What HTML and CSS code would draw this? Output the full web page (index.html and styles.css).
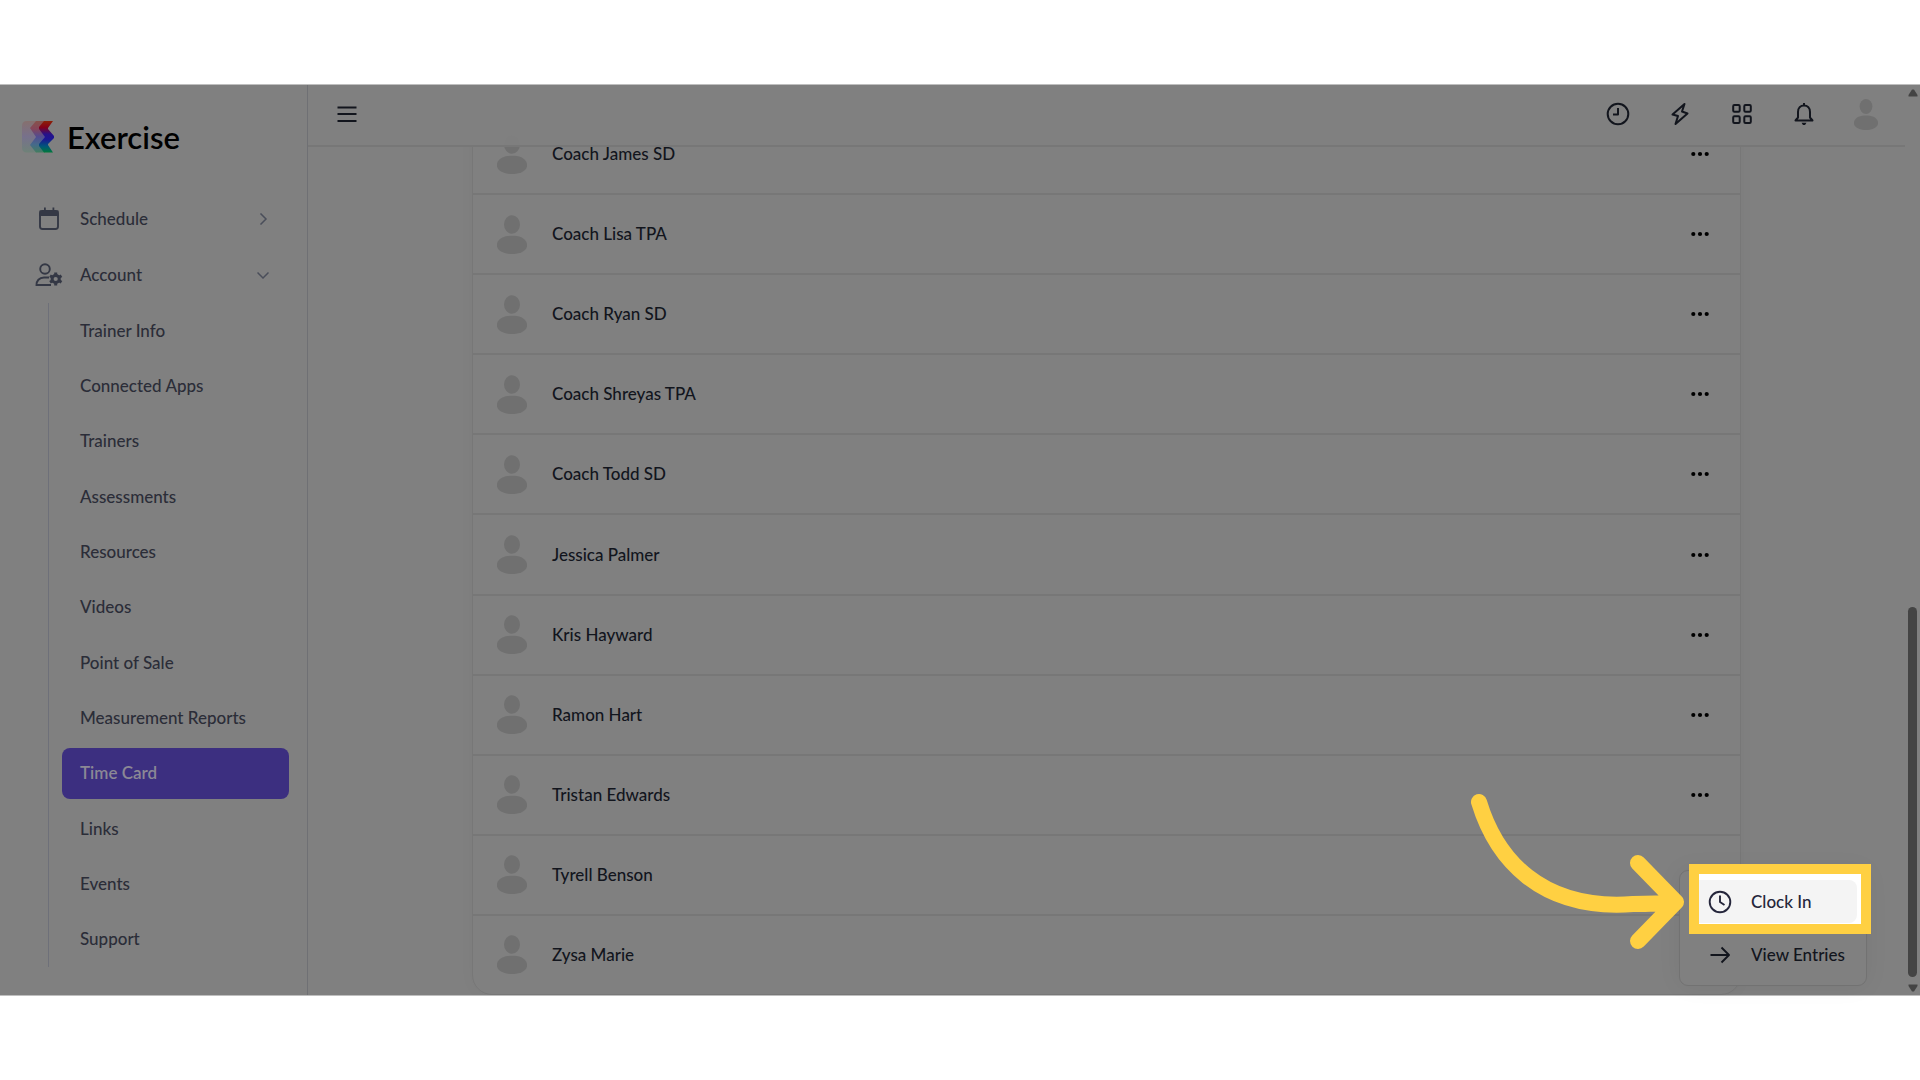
FILE: index.html
```html
<!DOCTYPE html>
<html lang="en">
<head>
<meta charset="utf-8">
<title>Exercise - Time Card</title>
<link rel="stylesheet" href="styles.css">
</head>
<body>
<svg class="defs" aria-hidden="true">
  <symbol id="person" viewBox="0 0 30 38">
    <ellipse cx="15" cy="9" rx="8" ry="9.3"/>
    <path d="M0 28C2 22 8 20.300 15 20.300S28 22 30 28V31C29 36 22 38.500 15 38.500S1 36 0 31Z"/>
  </symbol>
  <symbol id="dots" viewBox="0 0 18 6">
    <circle cx="2.300" cy="3" r="2.100"/><circle cx="9" cy="3" r="2.100"/><circle cx="15.700" cy="3" r="2.100"/>
  </symbol>
</svg>
<div class="app">
  <aside class="sidebar">
    <a class="brand" href="#">
      <svg width="32" height="32" viewBox="0 0 32 32" aria-hidden="true">
        <defs>
          <linearGradient id="spectrum" x1="0" y1="0" x2="0" y2="1">
            <stop offset="0" stop-color="#8c2206"/><stop offset=".2" stop-color="#850018"/>
            <stop offset=".42" stop-color="#26128a"/><stop offset=".58" stop-color="#1c1694"/>
            <stop offset=".8" stop-color="#00567a"/><stop offset="1" stop-color="#00793a"/>
          </linearGradient>
          <linearGradient id="pale" x1="0" y1="0" x2="0" y2="1">
            <stop offset="0" stop-color="#86706e"/><stop offset=".5" stop-color="#77718c"/><stop offset="1" stop-color="#6f8278"/>
          </linearGradient>
          <linearGradient id="soft" x1="0" y1="0" x2="0" y2="1">
            <stop offset="0" stop-color="#87514a"/><stop offset=".25" stop-color="#85465a"/>
            <stop offset=".5" stop-color="#514c92"/><stop offset=".75" stop-color="#456a8a"/><stop offset="1" stop-color="#437d5f"/>
          </linearGradient>
        </defs>
        <path d="M5 0H15L10 7L16 16L10 24L15 31.500H5Q0 31.500 0 26.500V5Q0 0 5 0Z" fill="url(#pale)"/>
        <path d="M14 0H24L18 7L24 16L18 24L23 31.500H14L8 24L14 16L8 7Z" fill="url(#soft)"/>
        <path d="M22 0H31L26 7V8L32 15V17L26 23V24L31 31.500H22L17 25V23L23 16L17 8V6Z" fill="url(#spectrum)"/>
      </svg>
      <span>Exercise</span>
    </a>
    <nav class="nav">
      <a class="nav-item" href="#">
        <svg class="nav-icon" width="28" height="24" viewBox="0 0 28 24" aria-hidden="true"><rect x="5" y="4" width="18" height="18" rx="2.500" fill="none" stroke="currentColor" stroke-width="1.900"/><path d="M4.500 3.500h19v5.500h-19zM9 .500h1.800v4H9zM17.500 .500h1.800v4h-1.800z" fill="currentColor"/></svg>
        <span>Schedule</span>
        <svg class="chevron" width="12" height="12" viewBox="0 0 12 12" aria-hidden="true"><path d="M3.500 .500L9 6L3.500 11.500"/></svg>
      </a>
      <a class="nav-item" href="#">
        <svg class="nav-icon" width="28" height="24" viewBox="0 0 28 24" fill="none" stroke="currentColor" stroke-width="1.900" aria-hidden="true"><circle cx="10" cy="6" r="4.800"/><path d="M14 14.500H9C4 14.500 1.500 18 1.500 22H16"/><circle cx="20.700" cy="16" r="3.600" stroke-width="3"/><path d="M20.700 9.500v3M20.700 19.500v3M15 12.700l2.500 1.500M24 17.800l2.500 1.500M15 19.300l2.500-1.500M24 14.200l2.500-1.500" stroke-width="3"/></svg>
        <span>Account</span>
        <svg class="chevron" width="12" height="12" viewBox="0 0 12 12" aria-hidden="true"><path d="M.500 3.500L6 9L11.500 3.500"/></svg>
      </a>
      <ul class="subnav">
        <li><a href="#">Trainer Info</a></li>
        <li><a href="#">Connected Apps</a></li>
        <li><a href="#">Trainers</a></li>
        <li><a href="#">Assessments</a></li>
        <li><a href="#">Resources</a></li>
        <li><a href="#">Videos</a></li>
        <li><a href="#">Point of Sale</a></li>
        <li><a href="#">Measurement Reports</a></li>
        <li><a class="active" href="#" aria-current="page">Time Card</a></li>
        <li><a href="#">Links</a></li>
        <li><a href="#">Events</a></li>
        <li><a href="#">Support</a></li>
      </ul>
    </nav>
  </aside>

  <main class="main">
    <header class="topbar">
      <button class="icon-button" aria-label="Toggle menu"><svg width="20" height="18" viewBox="0 0 20 18"><path d="M.500 2.500h19M.500 9h19M.500 16h19"/></svg></button>
      <div class="tools">
        <button class="icon-button" aria-label="Time clock"><svg width="24" height="24" viewBox="0 0 24 24"><circle cx="12" cy="12" r="10.300"/><path d="M12 6v6.500H7"/></svg></button>
        <button class="icon-button" aria-label="Quick actions"><svg width="24" height="24" viewBox="0 0 24 24"><path d="M16.500 2L4.500 12.500L10 14L7.500 22L19.500 11.500L14 9.500Z"/></svg></button>
        <button class="icon-button" aria-label="Apps"><svg width="24" height="24" viewBox="0 0 24 24"><rect x="3.200" y="3" width="6.500" height="6.800" rx="1.200"/><rect x="14.300" y="3" width="6.500" height="6.800" rx="1.200"/><rect x="3.200" y="14.200" width="6.500" height="6.800" rx="1.200"/><rect x="14.300" y="14.200" width="6.500" height="6.800" rx="1.200"/></svg></button>
        <button class="icon-button" aria-label="Notifications"><svg width="24" height="24" viewBox="0 0 24 24"><path d="M3.500 18.500L6 15.500V10C6 6 8.500 3.500 12 3.500S18 6 18 10V15.500L20.500 18.500ZM12 1v2.500"/><path d="M9.500 20.700h5L13 23h-2z" fill="currentColor" stroke="none"/></svg></button>
        <button class="icon-button" aria-label="Profile"><svg class="profile" width="24" height="31" viewBox="0 0 24 31"><use href="#person" width="24" height="31"/></svg></button>
      </div>
    </header>
    <ul class="people">
      <li><svg class="avatar"><use href="#person"/></svg><span>Coach James SD</span><button class="more" aria-label="More"><svg width="18" height="6"><use href="#dots"/></svg></button></li>
      <li><svg class="avatar"><use href="#person"/></svg><span>Coach Lisa TPA</span><button class="more" aria-label="More"><svg width="18" height="6"><use href="#dots"/></svg></button></li>
      <li><svg class="avatar"><use href="#person"/></svg><span>Coach Ryan SD</span><button class="more" aria-label="More"><svg width="18" height="6"><use href="#dots"/></svg></button></li>
      <li><svg class="avatar"><use href="#person"/></svg><span>Coach Shreyas TPA</span><button class="more" aria-label="More"><svg width="18" height="6"><use href="#dots"/></svg></button></li>
      <li><svg class="avatar"><use href="#person"/></svg><span>Coach Todd SD</span><button class="more" aria-label="More"><svg width="18" height="6"><use href="#dots"/></svg></button></li>
      <li><svg class="avatar"><use href="#person"/></svg><span>Jessica Palmer</span><button class="more" aria-label="More"><svg width="18" height="6"><use href="#dots"/></svg></button></li>
      <li><svg class="avatar"><use href="#person"/></svg><span>Kris Hayward</span><button class="more" aria-label="More"><svg width="18" height="6"><use href="#dots"/></svg></button></li>
      <li><svg class="avatar"><use href="#person"/></svg><span>Ramon Hart</span><button class="more" aria-label="More"><svg width="18" height="6"><use href="#dots"/></svg></button></li>
      <li><svg class="avatar"><use href="#person"/></svg><span>Tristan Edwards</span><button class="more" aria-label="More"><svg width="18" height="6"><use href="#dots"/></svg></button></li>
      <li><svg class="avatar"><use href="#person"/></svg><span>Tyrell Benson</span></li>
      <li><svg class="avatar"><use href="#person"/></svg><span>Zysa Marie</span></li>
    </ul>
  </main>

  <div class="scrollbar" aria-hidden="true">
    <svg width="10" height="8" viewBox="0 0 10 8"><path d="M4 .500h2L9.500 6v1.500h-9V6Z"/></svg>
    <div class="track"><div class="thumb"></div></div>
    <svg width="10" height="8" viewBox="0 0 10 8"><path d="M4 7.500h2L9.500 2V.500h-9V2Z"/></svg>
  </div>

  <div class="menu">
    <div class="spotlight">
      <button class="menu-item current"><svg width="24" height="24" viewBox="0 0 24 24" aria-hidden="true"><circle cx="12" cy="12" r="10.300"/><path d="M12 5.500V12l4.500 3"/></svg><span>Clock In</span></button>
    </div>
    <button class="menu-item"><svg width="24" height="24" viewBox="0 0 24 24" aria-hidden="true"><path d="M2.500 12H21M13.500 4.500L21 12L13.500 19.500"/></svg><span>View Entries</span></button>
  </div>
  <svg class="pointer" width="216" height="160" viewBox="0 0 216 160" aria-hidden="true">
    <path d="M10 12C27 68 71 121 164 114Q188 114 207 112M169 73L207 112L169 151"/>
  </svg>
</div>
</body>
</html>
```
FILE: styles.css
```css
* { box-sizing: border-box; }

body {
  margin: 0;
  min-height: 100vh;
  display: flex;
  flex-direction: column;
  padding: 84px 0;
  background: #fff;
  color: #12151d;
  font: 500 17px/24px Lato, "Open Sans", sans-serif;
}

a { color: inherit; text-decoration: none; }
ul { margin: 0; padding: 0; list-style: none; }
button { padding: 0; border: 0; background: none; color: inherit; font: inherit; cursor: pointer; }
svg { display: block; flex: none; }
.defs { position: absolute; width: 0; height: 0; }

.app {
  position: relative;
  flex: 1;
  display: flex;
  border-top: 1px solid #bfbfbf;
  border-bottom: 1px solid #bfbfbf;
  background: #808080;
}

/* Sidebar */
.sidebar {
  width: 308px;
  flex: none;
  display: flex;
  flex-direction: column;
  border-right: 1px solid #6f7074;
  color: #2b2d38;
}
.brand {
  display: flex;
  align-items: center;
  gap: 13px;
  height: 106px;
  padding: 0 0 2px 22px;
  color: #000;
  font-size: 31px;
  line-height: 36px;
  font-weight: 600;
}
.nav { flex: 1; display: flex; flex-direction: column; padding-bottom: 28px; }
.nav-item {
  display: flex;
  align-items: center;
  height: 56px;
  padding: 0 38px 0 35px;
}
.nav-icon { margin-right: 17px; color: #343845; }
.chevron { margin-left: auto; fill: none; stroke: #4a4e5a; stroke-width: 1.5; }
.subnav {
  flex: 1;
  display: flex;
  flex-direction: column;
  margin: 0 18px 0 48px;
  border-left: 1px solid #6e7079;
}
.subnav li { flex: 1; display: flex; padding: 2px 0 2px 13px; }
.subnav a {
  flex: 1;
  display: flex;
  align-items: center;
  padding: 0 18px;
  border-radius: 8px;
}
.subnav .active { background: #3c2f80; color: #8b8895; font-weight: 600; }

/* Main column */
.main { flex: 1; display: flex; flex-direction: column; overflow: hidden; }
.topbar {
  z-index: 1;
  height: 62px;
  flex: none;
  display: flex;
  align-items: center;
  justify-content: space-between;
  padding: 0 27px 2px 29px;
  border-bottom: 2px solid #777;
  background: rgba(128, 128, 128, .96);
}
.tools { display: flex; align-items: center; gap: 38px; }
.icon-button svg { fill: none; stroke: currentColor; stroke-width: 2; stroke-linejoin: round; }
.icon-button .profile { fill: #707070; stroke: none; }

.people {
  flex: 1;
  display: flex;
  flex-direction: column;
  width: calc(100% - 328px);
  margin: -33px auto 0;
  border: 1px solid #777;
  border-radius: 0 0 20px 20px;
  box-shadow: 0 0 16px rgba(0, 0, 0, .03);
}
.people li {
  flex: 1;
  display: flex;
  align-items: center;
  padding: 0 31px 0 24px;
}
.people li + li { border-top: 2px solid #777; }
.avatar { width: 30px; height: 39px; margin-right: 25px; fill: #707070; }
.more { margin-left: auto; }

/* Scrollbar */
.scrollbar {
  width: 15px;
  flex: none;
  display: flex;
  flex-direction: column;
  align-items: center;
  justify-content: space-between;
  padding: 4px 0 3px;
  fill: #444;
}
.track { flex: 1; display: flex; align-items: flex-end; padding: 0 0 7px; }
.thumb { width: 9px; height: 42%; border-radius: 5px; background: #444; }

/* Time clock menu */
.menu {
  position: absolute;
  z-index: 2;
  right: 53px;
  bottom: 9px;
  width: 188px;
  display: flex;
  flex-direction: column;
  gap: 10px;
  padding: 9px;
  border: 1px solid #727272;
  border-radius: 9px;
  background: #808080;
  box-shadow: 0 0 24px rgba(0, 0, 0, .06);
}
.menu-item {
  width: 100%;
  height: 43px;
  display: flex;
  align-items: center;
  gap: 19px;
  padding-left: 19px;
  border-radius: 8px;
}
.menu-item svg { fill: none; stroke: currentColor; stroke-width: 1.9; stroke-linejoin: round; }
.spotlight { position: relative; z-index: 0; }
.current { background: #f4f4f4; color: #25263b; }
.spotlight::before, .spotlight::after {
  content: "";
  position: absolute;
  inset: -16px -14px -11px 0;
  border: 10px solid #ffd042;
  pointer-events: none;
}
.spotlight::before { z-index: -1; background: #fff; }
.pointer {
  position: absolute;
  z-index: 2;
  right: 235px;
  bottom: 45px;
  fill: none;
  stroke: #ffd042;
  stroke-width: 16;
  stroke-linecap: round;
  stroke-linejoin: round;
}
```
